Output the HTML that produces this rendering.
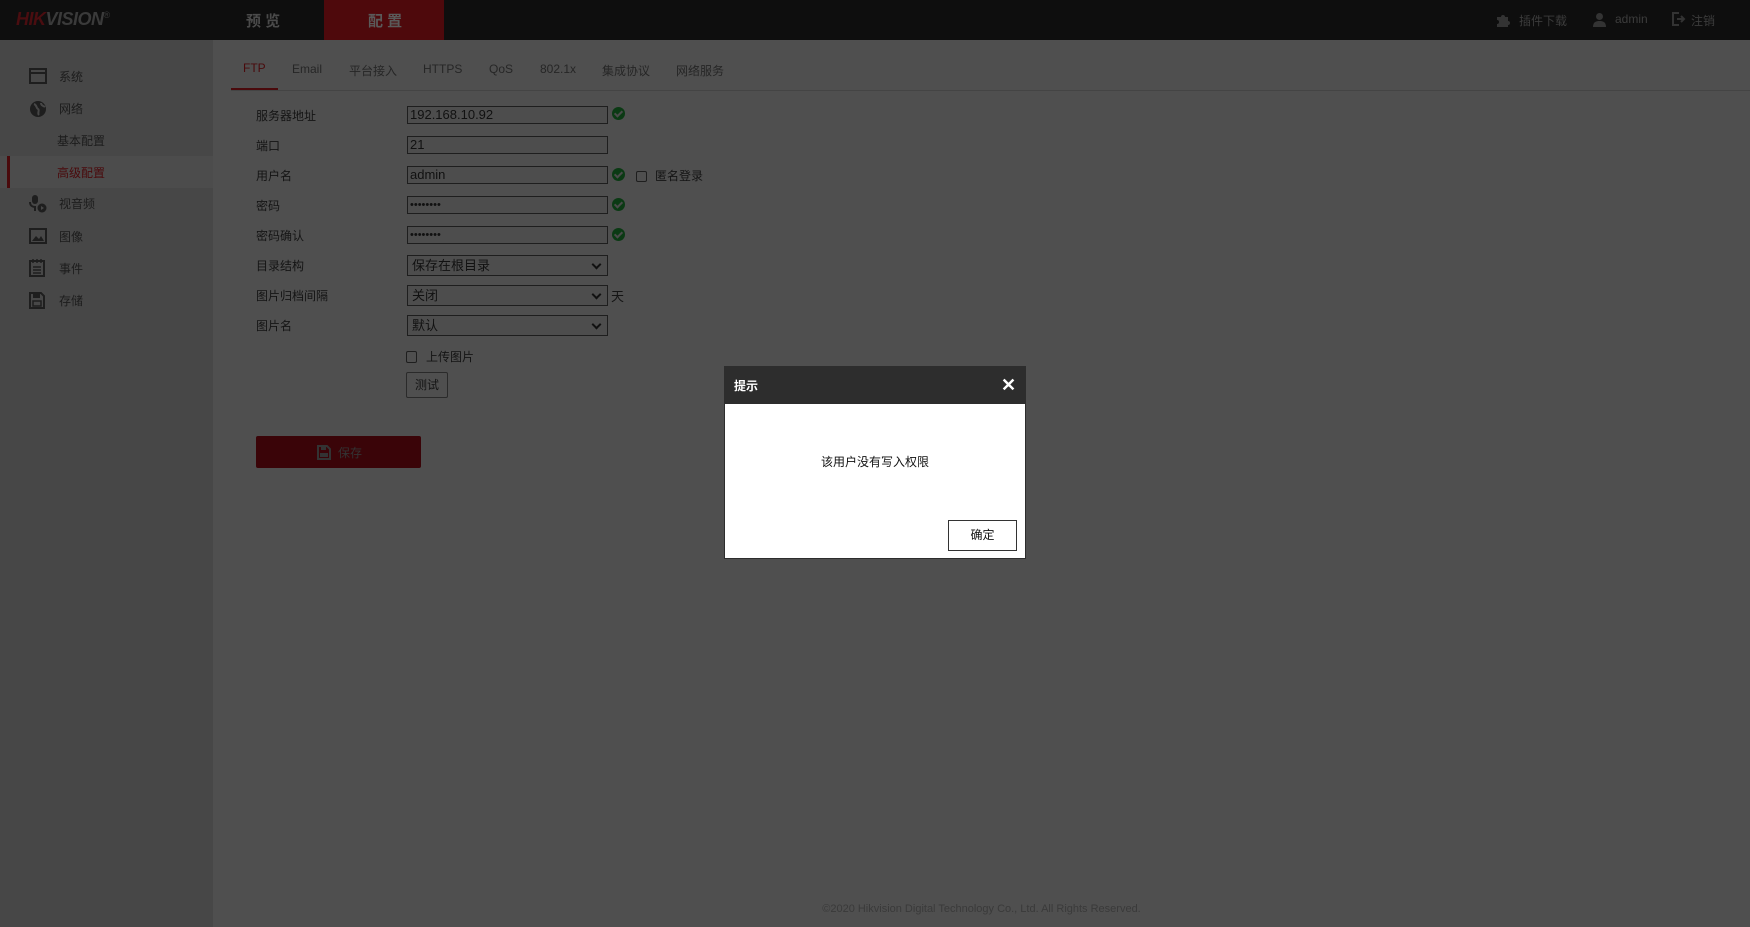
<!DOCTYPE html>
<html><head><meta charset="utf-8"><style>
*{margin:0;padding:0;box-sizing:border-box}
body{width:1750px;height:927px;background:#4f4f4f;font-family:"Liberation Sans","Noto Sans CJK SC",sans-serif;font-size:12px;color:#161616;position:relative;overflow:hidden}
.a{position:absolute;white-space:nowrap}
.hdr{left:0;top:0;width:1750px;height:40px;background:#0e0e0e}
.side{left:0;top:40px;width:213px;height:887px;background:#474747}
.inp{position:absolute;left:407px;width:201px;height:18px;border:1px solid #1e1e1e;background:#4d4d4d;font-size:13px;padding-left:2px;line-height:16px;color:#111}
.sel{position:absolute;left:407px;width:201px;height:21px;border:1px solid #1e1e1e;background:#4d4d4d;font-size:13px;padding-left:4px;line-height:19px;color:#111}
.sel:after{content:"";position:absolute;right:7px;top:5px;width:5px;height:5px;border-right:2px solid #111;border-bottom:2px solid #111;transform:rotate(45deg)}
.lbl{position:absolute;left:256px;font-size:12px;color:#141414}
.ok{position:absolute;left:612px;width:13px;height:13px;border-radius:50%;background:#0b3a14}
.ok:after{content:"";position:absolute;left:4px;top:2px;width:3px;height:6px;border-right:2px solid #4a4a4a;border-bottom:2px solid #4a4a4a;transform:rotate(45deg)}
.si{position:absolute;left:59px;font-size:12px;color:#1c1c1c}
.tab{position:absolute;top:62px;font-size:12px;color:#262626}
</style></head><body>
<div class="a hdr"></div>
<div class="a" style="left:16px;top:9px;font-size:18px;font-weight:bold;font-style:italic;color:#4a0d10;letter-spacing:-0.5px">HIK<span style="color:#3a3a3a">VISION</span><sup style="font-size:9px;color:#3a3a3a;font-style:normal;font-weight:normal">®</sup></div>
<div class="a" style="left:324px;top:0;width:120px;height:40px;background:#4e090c"></div>
<div class="a" style="left:246px;top:10px;font-size:15px;font-weight:bold;color:#4a4a4a">预 览</div>
<div class="a" style="left:368px;top:10px;font-size:15px;font-weight:bold;color:#5a5a5a">配 置</div>
<svg class="a" style="left:1495px;top:12px" width="16" height="16" viewBox="0 0 16 16"><path d="M2 5h4a2 2 0 1 1 4 0h3v4a2 2 0 1 1 0 4v2H2v-3a2 2 0 1 0 0-4z" fill="#333"/></svg>
<div class="a" style="left:1519px;top:12px;color:#3c3c3c;font-size:12px">插件下载</div>
<svg class="a" style="left:1592px;top:12px" width="15" height="15" viewBox="0 0 15 15"><circle cx="7.5" cy="4.5" r="3.5" fill="#333"/><path d="M1 15c0-5 3-6 6.5-6s6.5 1 6.5 6z" fill="#333"/></svg>
<div class="a" style="left:1615px;top:12px;color:#3c3c3c;font-size:12px">admin</div>
<svg class="a" style="left:1672px;top:12px" width="14" height="14" viewBox="0 0 14 14"><path d="M7 1H1v12h6" stroke="#333" stroke-width="2" fill="none"/><path d="M5 7h7M9 4l3 3-3 3" stroke="#333" stroke-width="2" fill="none"/></svg>
<div class="a" style="left:1691px;top:12px;color:#3c3c3c;font-size:12px">注销</div>

<div class="a side"></div>
<div class="a" style="left:0;top:156px;width:213px;height:32px;background:#4c4c4c"></div>
<div class="a" style="left:7px;top:156px;width:3px;height:32px;background:#4a0a0c"></div>
<svg class="a" style="left:29px;top:68px" width="18" height="16"><rect x="1" y="1" width="16" height="14" fill="none" stroke="#1e1e1e" stroke-width="2"/><path d="M1 5h16" stroke="#1e1e1e" stroke-width="2"/></svg>
<div class="si" style="top:68px">系统</div>
<svg class="a" style="left:29px;top:100px" width="18" height="18"><circle cx="9" cy="9" r="8" fill="#1e1e1e"/><path d="M5 4c3 1 2 4 4 5s-1 4 1 6M12 3c0 3 3 3 4 4" stroke="#474747" stroke-width="2" fill="none"/></svg>
<div class="si" style="top:100px">网络</div>
<div class="si" style="top:132px;left:57px">基本配置</div>
<div class="si" style="top:164px;left:57px;color:#4a0a0c">高级配置</div>
<svg class="a" style="left:29px;top:195px" width="18" height="18"><rect x="3" y="0" width="6" height="9" rx="3" fill="#1e1e1e"/><path d="M1 7c0 4 3 5 5 5v4" stroke="#1e1e1e" stroke-width="2" fill="none"/><circle cx="13" cy="13" r="4.5" fill="#1e1e1e"/><path d="M12 11v4l3-2z" fill="#474747"/></svg>
<div class="si" style="top:195px">视音频</div>
<svg class="a" style="left:29px;top:228px" width="18" height="16"><rect x="1" y="1" width="16" height="14" fill="none" stroke="#1e1e1e" stroke-width="2"/><path d="M3 13l4-5 3 3 2-3 3 5z" fill="#1e1e1e"/></svg>
<div class="si" style="top:228px">图像</div>
<svg class="a" style="left:29px;top:259px" width="16" height="18"><rect x="1" y="2" width="14" height="15" fill="none" stroke="#1e1e1e" stroke-width="2"/><path d="M4 0v4M8 0v4M12 0v4M4 8h8M4 11h8M4 14h8" stroke="#1e1e1e" stroke-width="1.5"/></svg>
<div class="si" style="top:260px">事件</div>
<svg class="a" style="left:29px;top:292px" width="16" height="17"><path d="M1 1h11l3 3v12H1z" fill="none" stroke="#1e1e1e" stroke-width="2"/><rect x="4" y="2" width="7" height="4" fill="#1e1e1e"/><rect x="4" y="9" width="8" height="5" fill="none" stroke="#1e1e1e" stroke-width="1.5"/></svg>
<div class="si" style="top:292px">存储</div>

<div class="a" style="left:231px;top:90px;width:1519px;height:1px;background:#444"></div>
<div class="a" style="left:231px;top:88px;width:47px;height:2px;background:#4a0a0c"></div>
<div class="tab" style="left:243px;top:61px;color:#4a0a0c">FTP</div>
<div class="tab" style="left:292px">Email</div>
<div class="tab" style="left:349px">平台接入</div>
<div class="tab" style="left:423px">HTTPS</div>
<div class="tab" style="left:489px">QoS</div>
<div class="tab" style="left:540px">802.1x</div>
<div class="tab" style="left:602px">集成协议</div>
<div class="tab" style="left:676px">网络服务</div>

<div class="lbl" style="top:107px">服务器地址</div><div class="inp" style="top:106px">192.168.10.92</div><div class="ok" style="top:107px"></div>
<div class="lbl" style="top:137px">端口</div><div class="inp" style="top:136px">21</div>
<div class="lbl" style="top:167px">用户名</div><div class="inp" style="top:166px">admin</div><div class="ok" style="top:168px"></div>
<div class="a" style="left:636px;top:171px;width:11px;height:11px;border:1px solid #1e1e1e;border-radius:2px"></div>
<div class="lbl" style="left:655px;top:167px">匿名登录</div>
<div class="lbl" style="top:197px">密码</div><div class="inp" style="top:196px;font-size:11px">••••••••</div><div class="ok" style="top:198px"></div>
<div class="lbl" style="top:227px">密码确认</div><div class="inp" style="top:226px;font-size:11px">••••••••</div><div class="ok" style="top:228px"></div>
<div class="lbl" style="top:257px">目录结构</div><div class="sel" style="top:255px">保存在根目录</div>
<div class="lbl" style="top:287px">图片归档间隔</div><div class="sel" style="top:285px">关闭</div><div class="lbl" style="left:611px;top:286px;font-size:13px">天</div>
<div class="lbl" style="top:317px">图片名</div><div class="sel" style="top:315px">默认</div>
<div class="a" style="left:406px;top:351px;width:11px;height:12px;border:1px solid #1e1e1e;border-radius:2px"></div>
<div class="lbl" style="left:426px;top:348px">上传图片</div>
<div class="a" style="left:406px;top:372px;width:42px;height:26px;border:1px solid #2a2a2a;border-radius:2px;font-size:12px;text-align:center;line-height:24px;color:#141414">测试</div>
<div class="a" style="left:256px;top:436px;width:165px;height:32px;background:#3a0408;border-radius:2px"></div>
<svg class="a" style="left:317px;top:445px" width="14" height="15"><path d="M1 1h9l3 3v10H1z" fill="none" stroke="#333" stroke-width="2"/><rect x="4" y="2" width="5" height="3" fill="#333"/><rect x="3" y="8" width="8" height="4" fill="#333"/></svg>
<div class="a" style="left:338px;top:444px;font-size:12px;color:#333">保存</div>
<div class="a" style="left:0;top:903px;width:1750px;padding-left:213px;text-align:center;font-size:11px;color:#3a3a3a">©2020 Hikvision Digital Technology Co., Ltd. All Rights Reserved.</div>

<div class="a" style="left:724px;top:366px;width:302px;height:193px;background:#fff;border:1px solid #2d2d2d"></div>
<div class="a" style="left:724px;top:366px;width:302px;height:38px;background:#2d2d2d"></div>
<div class="a" style="left:734px;top:377px;font-size:12px;font-weight:bold;color:#fff">提示</div>
<div class="a" style="left:1001px;top:375px;font-size:18px;font-weight:bold;color:#fff">✕</div>
<div class="a" style="left:724px;top:453px;width:302px;text-align:center;font-size:12px;color:#111">该用户没有写入权限</div>
<div class="a" style="left:948px;top:520px;width:69px;height:31px;border:1px solid #333;background:#fff;text-align:center;line-height:29px;font-size:12px;color:#111">确定</div>
</body></html>
